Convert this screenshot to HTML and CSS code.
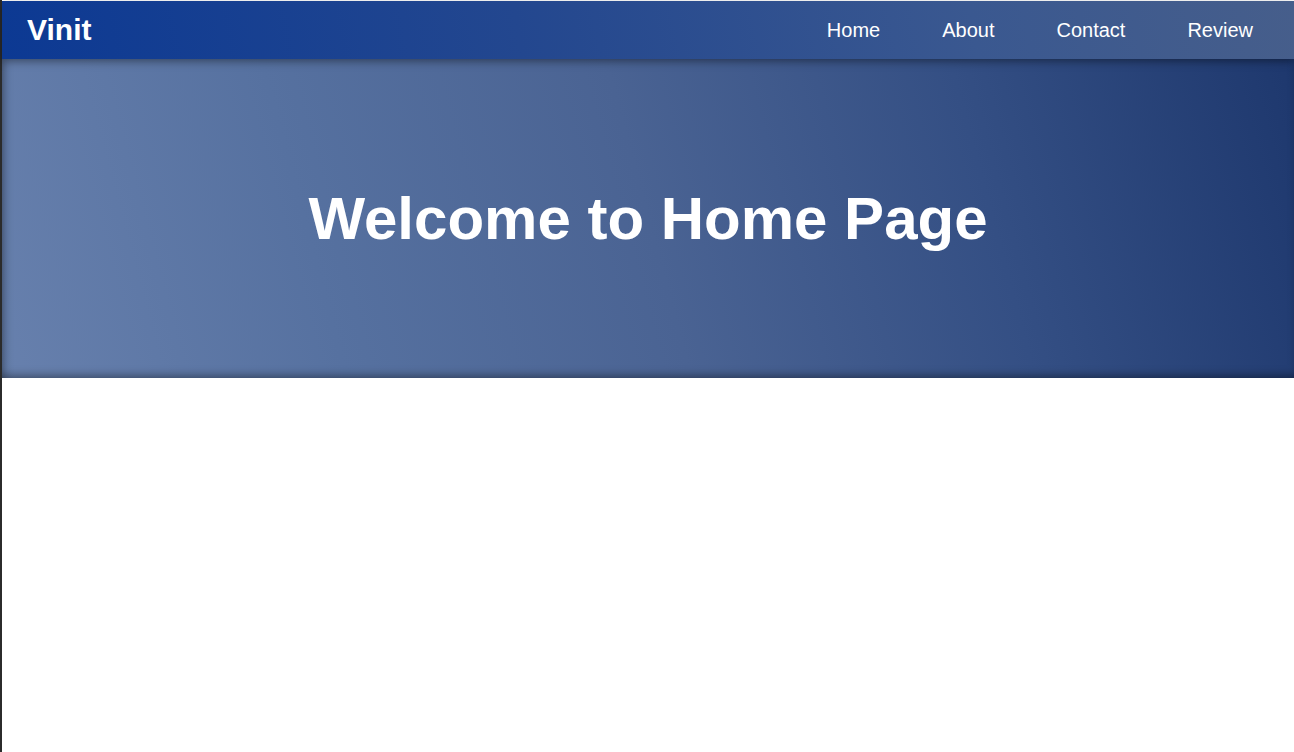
FILE: index.html
```html
<!DOCTYPE html>
<html lang="en">
<head>
<meta charset="utf-8">
<title>Vinit</title>
<link rel="stylesheet" href="styles.css">
</head>
<body>
<div class="page">
  <header class="navbar">
    <div class="brand">Vinit</div>
    <nav class="links">
      <a href="#">Home</a>
      <a href="#">About</a>
      <a href="#">Contact</a>
      <a href="#">Review</a>
    </nav>
  </header>
  <section class="hero">
    <h1>Welcome to Home Page</h1>
  </section>
</div>
</body>
</html>
```
FILE: styles.css
```css
html, body {
  margin: 0;
  padding: 0;
  height: 100%;
  background: #ffffff;
}
body {
  font-family: "Liberation Sans", Arial, sans-serif;
}
.page {
  min-height: 100%;
  box-sizing: border-box;
  border-left: 2px solid #2b2b2b;
  padding-top: 1px;
  background: #ffffff;
}
.navbar {
  position: relative;
  z-index: 2;
  height: 58px;
  display: flex;
  align-items: center;
  justify-content: space-between;
  padding: 0 41px 0 25px;
  background: linear-gradient(80deg, #0c3993 0%, #23478f 40%, #3a5890 75%, #465e8b 100%);
  box-shadow: 0 3px 8px rgba(0, 0, 0, 0.35);
}
.brand {
  color: #ffffff;
  font-weight: bold;
  font-size: 30px;
}
.links {
  display: flex;
  gap: 62px;
  padding-top: 1px;
}
.links a {
  color: #ffffff;
  text-decoration: none;
  font-size: 20px;
}
.hero {
  height: 319px;
  display: flex;
  align-items: center;
  justify-content: center;
  background: linear-gradient(75deg, #6780ad 0%, #5671a0 25%, #4a6393 50%, #344f84 75%, #1e386e 100%);
  box-shadow: inset 0 -6px 8px -3px rgba(0, 0, 0, 0.35), inset 8px 0 10px -6px rgba(0, 0, 0, 0.3);
}
.hero h1 {
  margin: 0;
  color: #ffffff;
  font-size: 60px;
  font-weight: bold;
}
```
